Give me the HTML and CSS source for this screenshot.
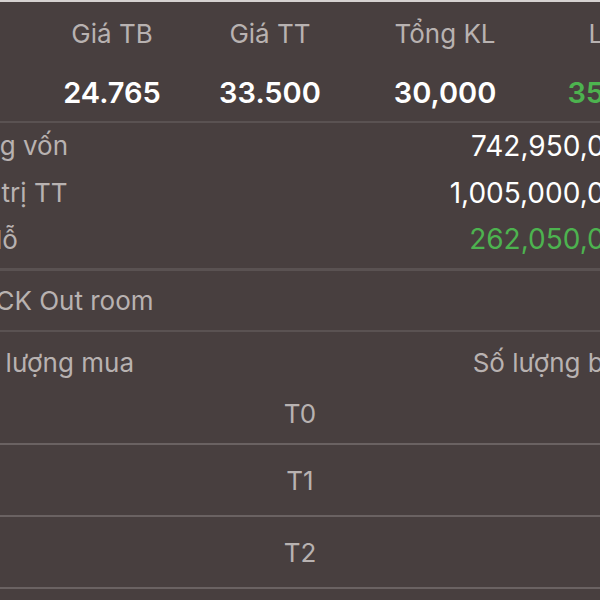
FILE: index.html
```html
<!DOCTYPE html>
<html lang="vi">
<head>
<meta charset="utf-8">
<title>Danh mục</title>
<link rel="stylesheet" href="styles.css">
</head>
<body>
<div class="screen">
  <div class="grid head">
    <div class="cell"></div>
    <div class="cell">Giá TB</div>
    <div class="cell">Giá TT</div>
    <div class="cell">Tổng KL</div>
    <div class="cell">Lãi/lỗ</div>
  </div>
  <div class="grid vals">
    <div class="cell"></div>
    <div class="cell">24.765</div>
    <div class="cell">33.500</div>
    <div class="cell">30,000</div>
    <div class="cell up">35.27%</div>
  </div>
  <div class="sep"></div>
  <div class="summary">
    <div class="srow"><span class="lbl">Tổng vốn</span><span class="num">742,950,000</span></div>
    <div class="srow"><span class="lbl">Giá trị TT</span><span class="num">1,005,000,000</span></div>
    <div class="srow"><span class="lbl pl-lbl">Lãi/lỗ</span><span class="num up">262,050,000</span></div>
  </div>
  <div class="sep thick"></div>
  <div class="ck"><span class="lbl ck-lbl">Mã CK Out room</span></div>
  <div class="sep"></div>
  <div class="qty">
    <span class="lbl qty-buy">Số lượng mua</span>
    <span class="lbl qty-sell">Số lượng bán</span>
  </div>
  <div class="trow first">T0</div>
  <div class="sep light"></div>
  <div class="trow">T1</div>
  <div class="sep light"></div>
  <div class="trow">T2</div>
  <div class="sep light"></div>
  <div class="trow"></div>
</div>
</body>
</html>
```
FILE: styles.css
```css
html, body {
  margin: 0;
  padding: 0;
  background: #483f3f;
  overflow: hidden;
  height: 600px;
}
body {
  font-family: Inter, "Noto Sans", "Liberation Sans", sans-serif;
  color: #b8b2b1;
  border-top: 2px solid #d6d2d1;
}
.screen {
  margin-left: -62px;
  width: 718px;
  padding: 0 16px;
  box-sizing: border-box;
}
.grid {
  display: grid;
  grid-template-columns: 78px 160px 156px 194px 160px;
}
.cell {
  text-align: center;
  white-space: nowrap;
}
.head {
  height: 62px;
  align-items: center;
  font-size: 26px;
}
.vals {
  height: 57px;
  align-items: center;
  font-size: 29px;
  font-weight: 600;
  color: #ffffff;
}
.up { color: #4db34f; }
.sep {
  height: 2px;
  background: #5a5252;
  margin: 0 -16px;
}
.sep.thick { height: 3px; }
.sep.light { background: #6a6262; }
.summary {
  display: flex;
  flex-direction: column;
  padding: 0 0 5px;
}
.srow {
  display: flex;
  justify-content: space-between;
  align-items: center;
  height: 47px;
  padding-bottom: 2px;
  box-sizing: border-box;
  white-space: nowrap;
}
.srow:last-child {
  height: 46px;
}
.lbl {
  font-size: 26px;
  white-space: nowrap;
}
.pl-lbl { margin-left: -3px; }
.num {
  font-size: 28px;
  color: #ffffff;
}
.num.up { color: #4db34f; }
.ck {
  height: 59px;
  display: flex;
  align-items: center;
}
.ck-lbl { margin-left: -4px; }
.qty {
  height: 58px;
  display: flex;
  justify-content: space-between;
  align-items: center;
  padding-top: 2px;
  box-sizing: border-box;
}
.qty-buy { margin-left: 12px; }
.qty-sell { margin-right: 6px; }
.trow {
  height: 70px;
  display: flex;
  align-items: center;
  justify-content: center;
  padding-left: 6px;
  box-sizing: border-box;
  font-size: 26px;
}
.trow.first {
  height: 53px;
  padding-bottom: 14px;
  align-items: flex-end;
}
```
